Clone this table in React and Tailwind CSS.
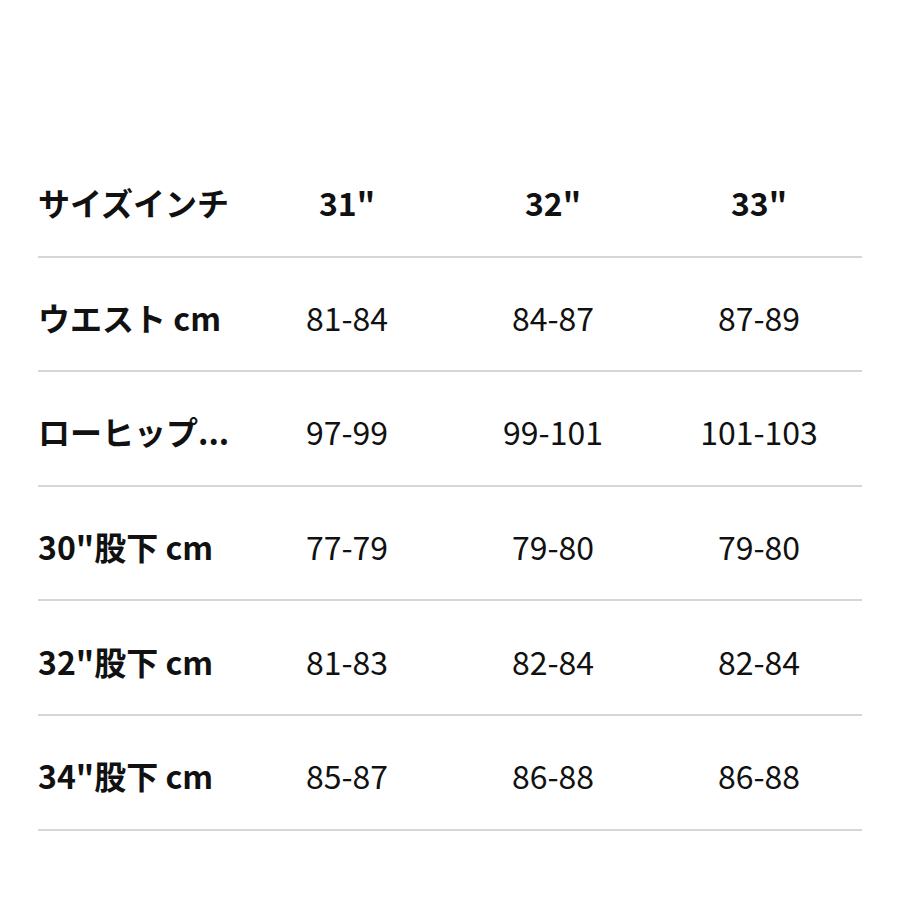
import React from 'react';

const HEAD = ['サイズインチ', '31"', '32"', '33"'];

const ROWS = [
  ['ウエスト cm', '81-84', '84-87', '87-89'],
  ['ローヒップ...', '97-99', '99-101', '101-103'],
  ['30"股下 cm', '77-79', '79-80', '79-80'],
  ['32"股下 cm', '81-83', '82-84', '82-84'],
  ['34"股下 cm', '85-87', '86-88', '86-88'],
];

const FONT = { fontFamily: '"Noto Sans CJK JP", "Noto Sans", sans-serif' };

const Row = ({ cells, head }) => (
  <div className="grid grid-cols-4 items-center h-[114.6px] pt-[6px] border-b-2 border-[#d6d6d6]">
    {cells.map((c, i) => (
      <div
        key={i}
        className={`text-[32px] leading-none text-[#111] whitespace-nowrap ${
          i === 0 ? 'text-left font-bold' : 'text-center'
        } ${head ? 'font-bold' : ''}`}
      >
        {c}
      </div>
    ))}
  </div>
);

export default function App() {
  return (
    <div className="w-[900px] h-[900px] bg-white pt-[143px] px-[38px]" style={FONT}>
      <Row cells={HEAD} head />
      {ROWS.map((r) => (
        <Row key={r[0]} cells={r} />
      ))}
    </div>
  );
}
